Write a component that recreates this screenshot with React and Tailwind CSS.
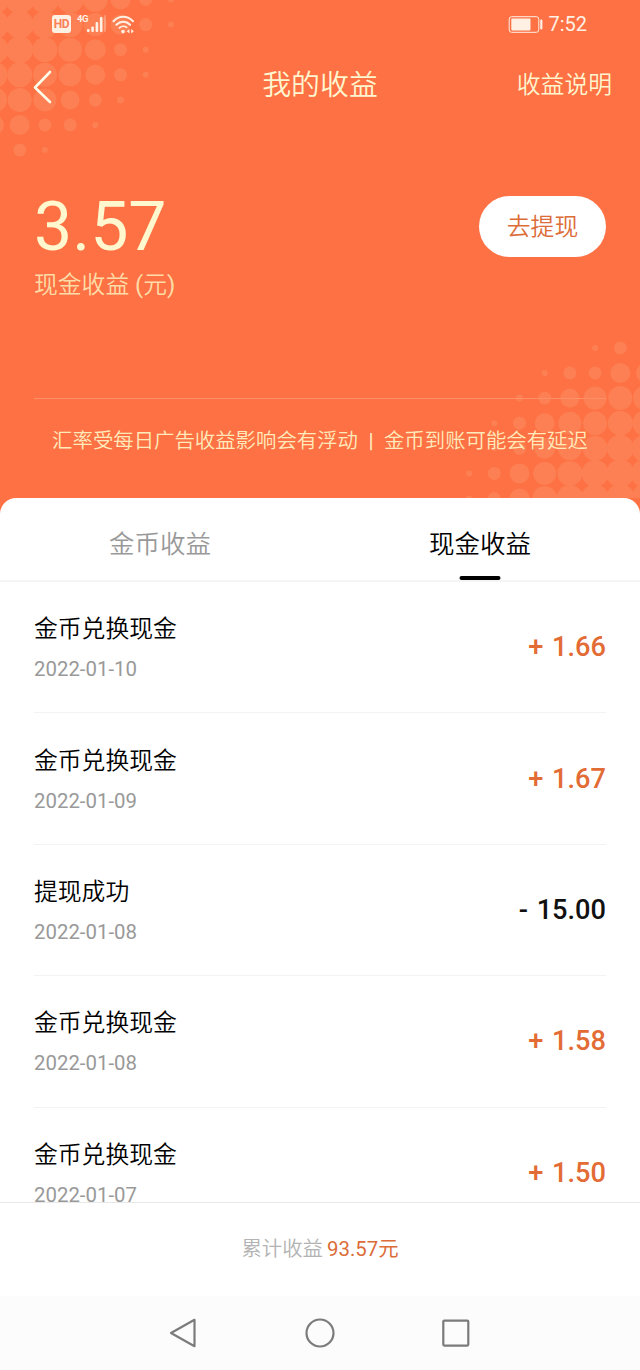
import React from "react";

const records = [
  { id: 1, title: "金币兑换现金", date: "2022-01-10", amount: "+ 1.66" },
  { id: 2, title: "金币兑换现金", date: "2022-01-09", amount: "+ 1.67" },
  { id: 3, title: "提现成功", date: "2022-01-08", amount: "- 15.00" },
  { id: 4, title: "金币兑换现金", date: "2022-01-08", amount: "+ 1.58" },
  { id: 5, title: "金币兑换现金", date: "2022-01-07", amount: "+ 1.50" },
];

// radius of each dot, one array per row, starting from the corner
const dotRows = [
  [14.5, 14.5, 14, 13.5, 12.5, 10, 6.5, 3],
  [14.5, 14, 13.5, 12.5, 11.5, 10, 6.5, 3],
  [14, 13.5, 12.5, 12, 10.5, 6.5, 3],
  [13, 12.5, 12, 11.5, 10, 6.5, 3],
  [12.5, 12, 11.5, 9.5, 6.5, 3.5],
  [9.5, 10, 6.5, 6.5, 3],
  [5, 6.5, 3],
];

const Dots = ({ className }) => (
  <svg className={className} width="190" height="165" viewBox="0 0 190 165" fill="#fc8053">
    {dotRows.map((row, y) => row.map((r, x) => <circle key={`${y}-${x}`} cx={x * 25.2 - 5.5} cy={y * 25.1 - 0.5} r={r} />))}
  </svg>
);

const StatusBar = () => (
  <div className="flex h-12 items-center justify-between pl-[52px] pr-[53px] text-[#fff0e4]">
    <div className="flex items-center">
      <div className="flex h-[18px] w-[19px] items-center justify-center rounded-[3px] bg-[#fff0e4] text-[12px] font-bold leading-none tracking-tight text-[#f98058]">HD</div>
      <div className="ml-[6px] h-[20px] w-[10px] whitespace-nowrap text-[9.5px] font-bold leading-[10px] tracking-tighter">4G</div>
      <svg width="20" height="18" viewBox="0 0 20 18" fill="currentColor">
        <rect x="0" y="14" width="2.6" height="3" rx="1" />
        <rect x="4.3" y="11.5" width="2.6" height="5.5" rx="1" />
        <rect x="8.6" y="7" width="2.6" height="10" rx="1" />
        <rect x="12.9" y="2" width="2.6" height="15" rx="1" />
        <rect x="17.2" y="0" width="1.6" height="17" rx="0.8" opacity="0.35" />
      </svg>
      <svg className="ml-[5px]" width="23" height="19" viewBox="0 0 23 19" fill="none" stroke="currentColor" strokeWidth="2.1" strokeLinecap="round">
        <path d="M1.5 6.2C7 0.3 15.5 0.3 21 6.2" />
        <path d="M4.4 9.8C8.4 5.7 14.1 5.7 18.1 9.8" />
        <path d="M7.5 12.8C9.7 10.9 12.8 10.9 14.6 12.4" strokeWidth="1.8" />
        <circle cx="11" cy="16.6" r="1.8" fill="currentColor" stroke="none" />
        <path d="M17.4 14v4.6l-2.6-2.3zM19.2 14v4.6l2.6-2.3z" fill="currentColor" stroke="none" />
      </svg>
    </div>
    <div className="flex items-center">
      <svg width="35" height="17" viewBox="0 0 35 17" fill="currentColor">
        <rect x="1.2" y="0.7" width="29.6" height="15.6" rx="2.5" fill="none" stroke="currentColor" strokeWidth="1" />
        <rect x="3.3" y="2.6" width="19.2" height="11.8" rx="0.8" />
        <rect x="32.2" y="3.5" width="2.2" height="10" rx="1" />
      </svg>
      <span className="ml-[5px] text-[20px] leading-none">7:52</span>
    </div>
  </div>
);

const Header = () => (
  <header className="relative h-[518px] shrink-0 overflow-hidden bg-[#fd7144]">
    <Dots className="absolute left-0 top-0" />
    <Dots className="absolute right-0 top-[333px] rotate-180" />
    <div className="relative">
      <StatusBar />
      <div className="flex h-[74px] items-center justify-between pl-[33px] pr-7 font-[350] text-[#fff5cf]">
        <div className="w-[100px]">
          <svg width="19" height="34" viewBox="0 0 19 34" className="mt-1" fill="none" stroke="#fffbe9" strokeWidth="2.6" strokeLinecap="round" strokeLinejoin="round">
            <path d="M17 2L2 17.5L17 32" />
          </svg>
        </div>
        <h1 className="text-[28.9px] leading-none">我的收益</h1>
        <span className="w-[105px] pt-0.5 text-right text-[23.8px] leading-none">收益说明</span>
      </div>
      <div className="mt-[68px] flex items-start justify-between px-[34px]">
        <div>
          <div className="text-[68px] leading-[75px] text-[#fff8cf]">3.57</div>
          <div className="mt-1 text-[23.8px] font-[350] leading-8 text-[#fedca7]">
            现金收益 <span className="font-normal">(</span>元<span className="font-normal">)</span>
          </div>
        </div>
        <button className="mt-[6px] h-[61px] w-[127px] rounded-full bg-white pt-0.5 text-[23.8px] font-[350] text-[#dc6c38]">去提现</button>
      </div>
      <div className="mx-[34px] mt-[97px] border-t border-[#fd9068]" />
      <p className="mt-[26px] flex items-center justify-center text-[20.4px] font-[350] leading-8 text-[#ffeabc]">
        <span>汇率受每日广告收益影响会有浮动</span>
        <span className="w-[26px] text-center font-medium">|</span>
        <span>金币到账可能会有延迟</span>
      </p>
    </div>
  </header>
);

const Tabs = () => (
  <div className="flex h-[84px] shrink-0 border-b-2 border-[#f5f5f5] text-[25.5px] font-[350]">
    <div className="flex flex-1 items-center justify-center pt-[11px] text-[#999]">金币收益</div>
    <div className="relative flex flex-1 items-center justify-center pt-[11px] text-black">
      现金收益
      <span className="absolute bottom-0 left-1/2 h-1 w-[41px] -translate-x-1/2 rounded-full bg-black" />
    </div>
  </div>
);

const RecordItem = ({ title, date, amount }) => (
  <li className="flex h-[131.4px] shrink-0 items-center justify-between border-b border-[#f3f3f3]">
    <div className="pt-px">
      <div className="pt-px text-[23.8px] font-[350] leading-9 text-black">{title}</div>
      <div className="mt-1.5 text-[20.4px] leading-8 text-[#999]">{date}</div>
    </div>
    <div className={`pt-px text-[27.2px] font-medium [word-spacing:2px] ${amount.startsWith("+") ? "text-[#e36b35]" : "text-[#111]"}`}>{amount}</div>
  </li>
);

const NavBar = () => (
  <nav className="flex h-[74px] shrink-0 items-center justify-center gap-[105px] bg-[#fcfcfc] text-[#7b7b7b]">
    <svg width="32" height="32" viewBox="0 0 32 32" fill="none" stroke="currentColor" strokeWidth="2.2" strokeLinejoin="round">
      <path d="M27.5 2.8V29.2L4 16Z" />
    </svg>
    <svg width="32" height="32" viewBox="0 0 32 32" fill="none" stroke="currentColor" strokeWidth="2.2">
      <circle cx="16" cy="16" r="13.5" />
    </svg>
    <svg width="32" height="32" viewBox="0 0 32 32" fill="none" stroke="currentColor" strokeWidth="2.2" strokeLinejoin="round">
      <rect x="2.3" y="3.6" width="25" height="25" rx="1" />
    </svg>
  </nav>
);

const App = () => {
  return (
    <div className="flex h-[1370px] w-[640px] flex-col overflow-hidden bg-white font-['Roboto','Noto_Sans_CJK_SC',sans-serif]">
      <Header />
      <main className="relative -mt-5 flex min-h-0 flex-1 flex-col rounded-t-[16px] bg-white">
        <Tabs />
        <ul className="flex min-h-0 flex-1 flex-col overflow-hidden px-[34px]">
          {records.map((item) => (
            <RecordItem key={item.id} {...item} />
          ))}
        </ul>
      </main>
      <footer className="flex h-[94px] shrink-0 items-center justify-center border-t border-[#e8e8e8] text-[20.4px]">
        <span className="font-[350] text-[#b3b3b3]">累计收益</span>
        <span className="ml-1 text-[#dc6c38]">93.57元</span>
      </footer>
      <NavBar />
    </div>
  );
};

export default App;
